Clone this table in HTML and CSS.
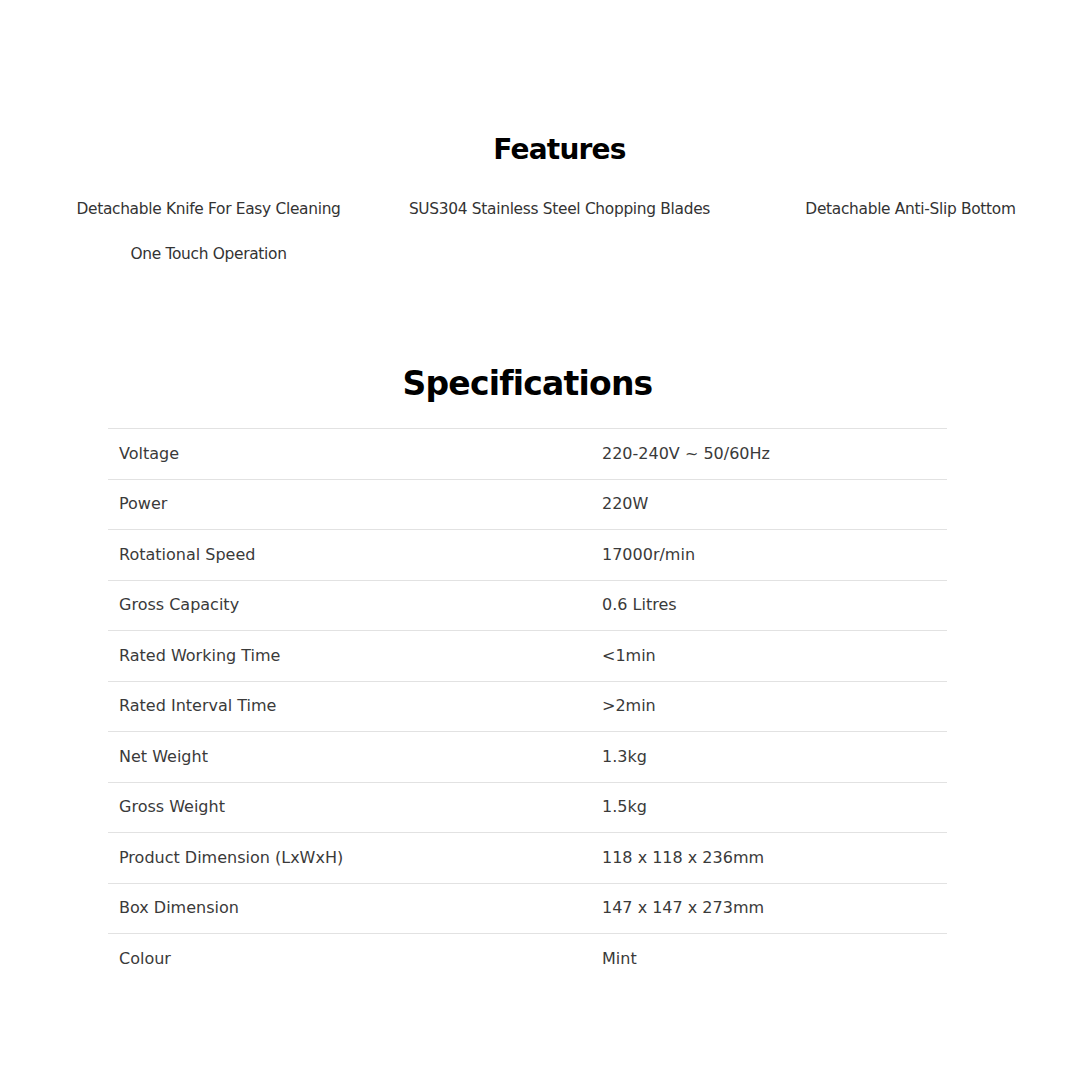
FILE: index.html
```html
<!DOCTYPE html>
<html lang="en">
<head>
<meta charset="utf-8">
<title>Features &amp; Specifications</title>
<link rel="stylesheet" href="styles.css">
</head>
<body>
<section class="features">
  <h2 class="features-title">Features</h2>
  <ul class="feature-grid">
    <li>Detachable Knife For Easy Cleaning</li>
    <li>SUS304 Stainless Steel Chopping Blades</li>
    <li>Detachable Anti-Slip Bottom</li>
    <li>One Touch Operation</li>
  </ul>
</section>
<section class="specs">
  <h2 class="specs-title">Specifications</h2>
  <div class="spec-table">
    <div class="spec-row"><span>Voltage</span><span>220-240V ~ 50/60Hz</span></div>
    <div class="spec-row"><span>Power</span><span>220W</span></div>
    <div class="spec-row"><span>Rotational Speed</span><span>17000r/min</span></div>
    <div class="spec-row"><span>Gross Capacity</span><span>0.6 Litres</span></div>
    <div class="spec-row"><span>Rated Working Time</span><span>&lt;1min</span></div>
    <div class="spec-row"><span>Rated Interval Time</span><span>&gt;2min</span></div>
    <div class="spec-row"><span>Net Weight</span><span>1.3kg</span></div>
    <div class="spec-row"><span>Gross Weight</span><span>1.5kg</span></div>
    <div class="spec-row"><span>Product Dimension (LxWxH)</span><span>118 x 118 x 236mm</span></div>
    <div class="spec-row"><span>Box Dimension</span><span>147 x 147 x 273mm</span></div>
    <div class="spec-row"><span>Colour</span><span>Mint</span></div>
  </div>
</section>
</body>
</html>
```

FILE: styles.css
```css
html, body {
  margin: 0;
  padding: 0;
  background: #ffffff;
}
body {
  font-family: "DejaVu Sans", "Liberation Sans", sans-serif;
  color: #333333;
  width: 1080px;
  overflow: hidden;
}
.features {
  width: 1053px;
  margin-left: 33px;
  padding-top: 130px;
}
.features-title {
  margin: 0;
  text-align: center;
  font-size: 28px;
  line-height: 40px;
  font-weight: 700;
  color: #000;
  letter-spacing: -0.8px;
}
.feature-grid {
  list-style: none;
  margin: 17px 0 0 0;
  padding: 0;
  display: grid;
  grid-template-columns: repeat(3, 351px);
}
.feature-grid li {
  text-align: center;
  font-size: 15.4px;
  line-height: 45px;
  color: #333;
  letter-spacing: -0.3px;
}
.specs {
  width: 839px;
  margin-left: 108px;
  padding-top: 85px;
}
.specs-title {
  margin: 0 0 22px 0;
  text-align: center;
  font-size: 33px;
  line-height: 44px;
  font-weight: 700;
  color: #000;
  letter-spacing: -0.8px;
}
.spec-table {
  display: flex;
  flex-direction: column;
}
.spec-row {
  display: grid;
  grid-template-columns: 483px 1fr;
  align-items: center;
  height: 50.5px;
  box-sizing: border-box;
  border-top: 1px solid #e2e2e2;
  padding: 0 11px 1px 11px;
  font-size: 16px;
  color: #3a3a3a;
}
```
